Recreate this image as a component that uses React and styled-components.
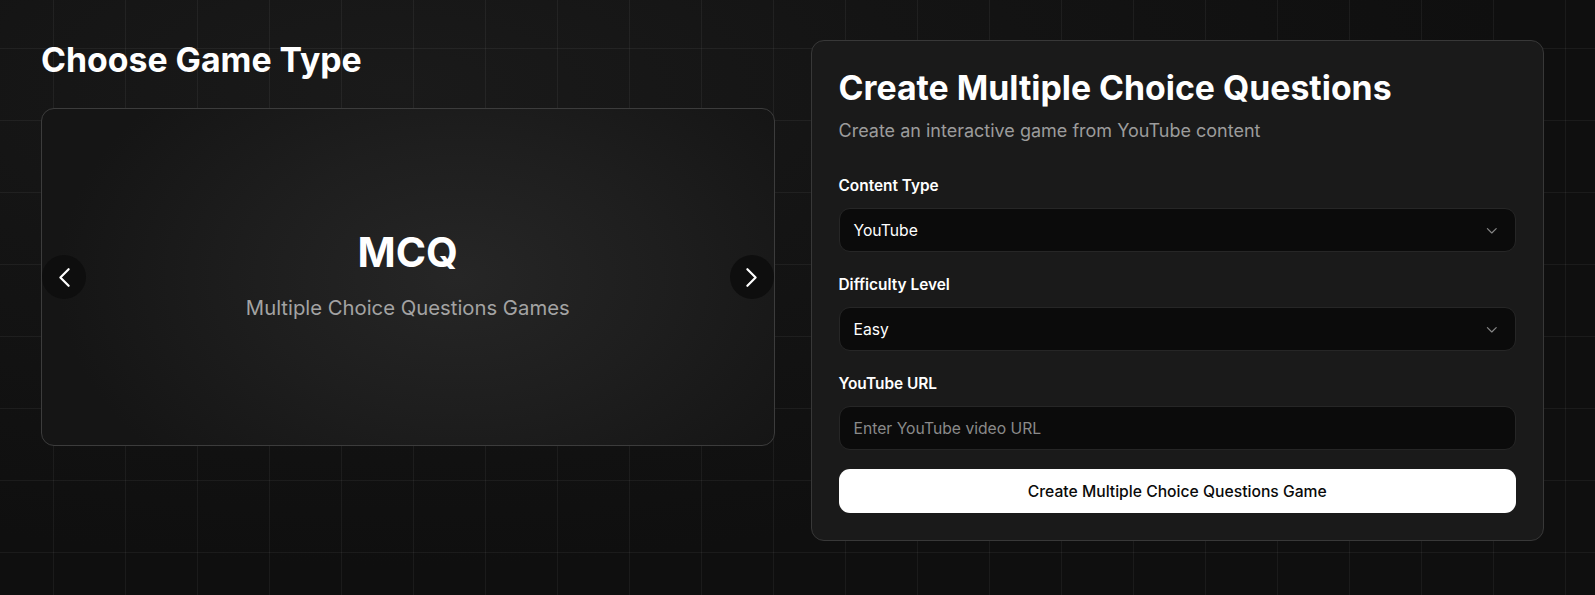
import React, { useState } from 'react';
import styled, { createGlobalStyle } from 'styled-components';
import { ChevronLeft, ChevronRight, ChevronDown } from 'lucide-react';

const games = [
    { code: 'MCQ', name: 'Multiple Choice Questions', subtitle: 'Multiple Choice Questions Games' },
];

const App = () => {
    const [index, setIndex] = useState(0);
    const [url, setUrl] = useState('');
    const game = games[index];

    const prev = () => setIndex((i) => (i - 1 + games.length) % games.length);
    const next = () => setIndex((i) => (i + 1) % games.length);

    return (
        <>
            <GlobalStyle />
            <Page>
                <Column>
                    <Heading>Choose Game Type</Heading>
                    <GameCard>
                        <NavButton side="left" onClick={prev} aria-label="Previous game">
                            <ChevronLeft size={33} strokeWidth={1.6} />
                        </NavButton>
                        <GameCode>{game.code}</GameCode>
                        <GameSubtitle>{game.subtitle}</GameSubtitle>
                        <NavButton side="right" onClick={next} aria-label="Next game">
                            <ChevronRight size={33} strokeWidth={1.6} />
                        </NavButton>
                    </GameCard>
                </Column>

                <Panel>
                    <PanelTitle>Create {game.name}</PanelTitle>
                    <PanelSubtitle>Create an interactive game from YouTube content</PanelSubtitle>

                    <Fields>
                        <Field>
                            <Label>Content Type</Label>
                            <SelectTrigger type="button">
                                <span>YouTube</span>
                                <ChevronDown size={17.6} strokeWidth={1.6} />
                            </SelectTrigger>
                        </Field>
                        <Field>
                            <Label>Difficulty Level</Label>
                            <SelectTrigger type="button">
                                <span>Easy</span>
                                <ChevronDown size={17.6} strokeWidth={1.6} />
                            </SelectTrigger>
                        </Field>
                        <Field>
                            <Label>YouTube URL</Label>
                            <TextInput
                                type="text"
                                value={url}
                                onChange={(e) => setUrl(e.target.value)}
                                placeholder="Enter YouTube video URL"
                            />
                        </Field>
                    </Fields>

                    <SubmitButton type="button">Create {game.name} Game</SubmitButton>
                </Panel>
            </Page>
        </>
    );
};

export default App;

// Styled Components
const GlobalStyle = createGlobalStyle`
    * {
        box-sizing: border-box;
    }

    body {
        margin: 0;
        background: #0f0f0f;
        font-family: Inter, 'Noto Sans', sans-serif;
        color: #ffffff;
        -webkit-font-smoothing: antialiased;
    }
`;

const Page = styled.div`
    min-height: 100vh;
    display: grid;
    grid-template-columns: 1fr 1fr;
    align-items: start;
    gap: 36px;
    padding: 40px 51px 40px 41px;
    background-color: #0f0f0f;
    background-image:
        linear-gradient(to right, rgba(255, 255, 255, 0.05) 1px, transparent 1px),
        linear-gradient(to bottom, rgba(255, 255, 255, 0.05) 1px, transparent 1px),
        radial-gradient(ellipse 70% 80% at 25% 15%, #1a1a1a 0%, #141414 45%, #0f0f0f 100%);
    background-size: 72px 72px, 72px 72px, 100% 100%;
    background-position: 53px 48px, 53px 48px, 0 0;
`;

const Column = styled.div`
    display: flex;
    flex-direction: column;
`;

const Heading = styled.h2`
    margin: 1px 0 29px;
    font-size: 33.8px;
    line-height: 38px;
    font-weight: 700;
    color: #ffffff;
`;

const GameCard = styled.div`
    position: relative;
    height: 338px;
    display: flex;
    flex-direction: column;
    align-items: center;
    justify-content: center;
    border: 1px solid #3c3c3c;
    border-radius: 13px;
    background: radial-gradient(ellipse 55% 80% at 57% 50%, #262626 0%, #1e1e1e 50%, #151515 100%);
`;

const GameCode = styled.h3`
    margin: 0 0 19px;
    font-size: 41px;
    line-height: 44px;
    font-weight: 700;
    color: #ffffff;
`;

const GameSubtitle = styled.p`
    margin: 0;
    font-size: 20.3px;
    line-height: 30.8px;
    color: #a3a3a3;
`;

const NavButton = styled.button`
    position: absolute;
    top: 50%;
    ${({ side }) => (side === 'left' ? 'left: 0;' : 'right: 0;')}
    transform: translateY(-50%);
    width: 44px;
    height: 44px;
    display: flex;
    align-items: center;
    justify-content: center;
    padding: 0;
    border: none;
    border-radius: 50%;
    background: #0e0e0e;
    color: #ffffff;
    cursor: pointer;
`;

const Panel = styled.div`
    display: flex;
    flex-direction: column;
    padding: 27px;
    border: 1px solid #383838;
    border-radius: 13px;
    background: #1a1a1a;
`;

const PanelTitle = styled.h2`
    margin: 0;
    font-size: 33.8px;
    line-height: 40px;
    font-weight: 700;
    color: #ffffff;
`;

const PanelSubtitle = styled.p`
    margin: 10px 0 31px;
    font-size: 18px;
    line-height: 26.4px;
    color: #9c9c9c;
`;

const Fields = styled.div`
    display: flex;
    flex-direction: column;
    gap: 22px;
`;

const Field = styled.div`
    display: flex;
    flex-direction: column;
    gap: 11px;
`;

const Label = styled.label`
    font-size: 15.4px;
    line-height: 22px;
    font-weight: 600;
    color: #ffffff;
`;

const SelectTrigger = styled.button`
    height: 44px;
    display: flex;
    align-items: center;
    justify-content: space-between;
    padding: 0 14px;
    border: 1px solid #262626;
    border-radius: 11px;
    background: #0b0b0b;
    color: #ffffff;
    font-family: inherit;
    font-size: 15.7px;
    text-align: left;
    cursor: pointer;

    svg {
        color: #ffffff;
        opacity: 0.5;
    }
`;

const TextInput = styled.input`
    height: 44px;
    padding: 0 14px;
    border: 1px solid #262626;
    border-radius: 11px;
    background: #0b0b0b;
    color: #ffffff;
    font-family: inherit;
    font-size: 15.7px;
    outline: none;

    &::placeholder {
        color: #8a8a8a;
    }
`;

const SubmitButton = styled.button`
    height: 44px;
    margin-top: 19px;
    border: none;
    border-radius: 11px;
    background: #ffffff;
    color: #0a0a0a;
    font-family: inherit;
    font-size: 15.7px;
    font-weight: 500;
    cursor: pointer;
`;
